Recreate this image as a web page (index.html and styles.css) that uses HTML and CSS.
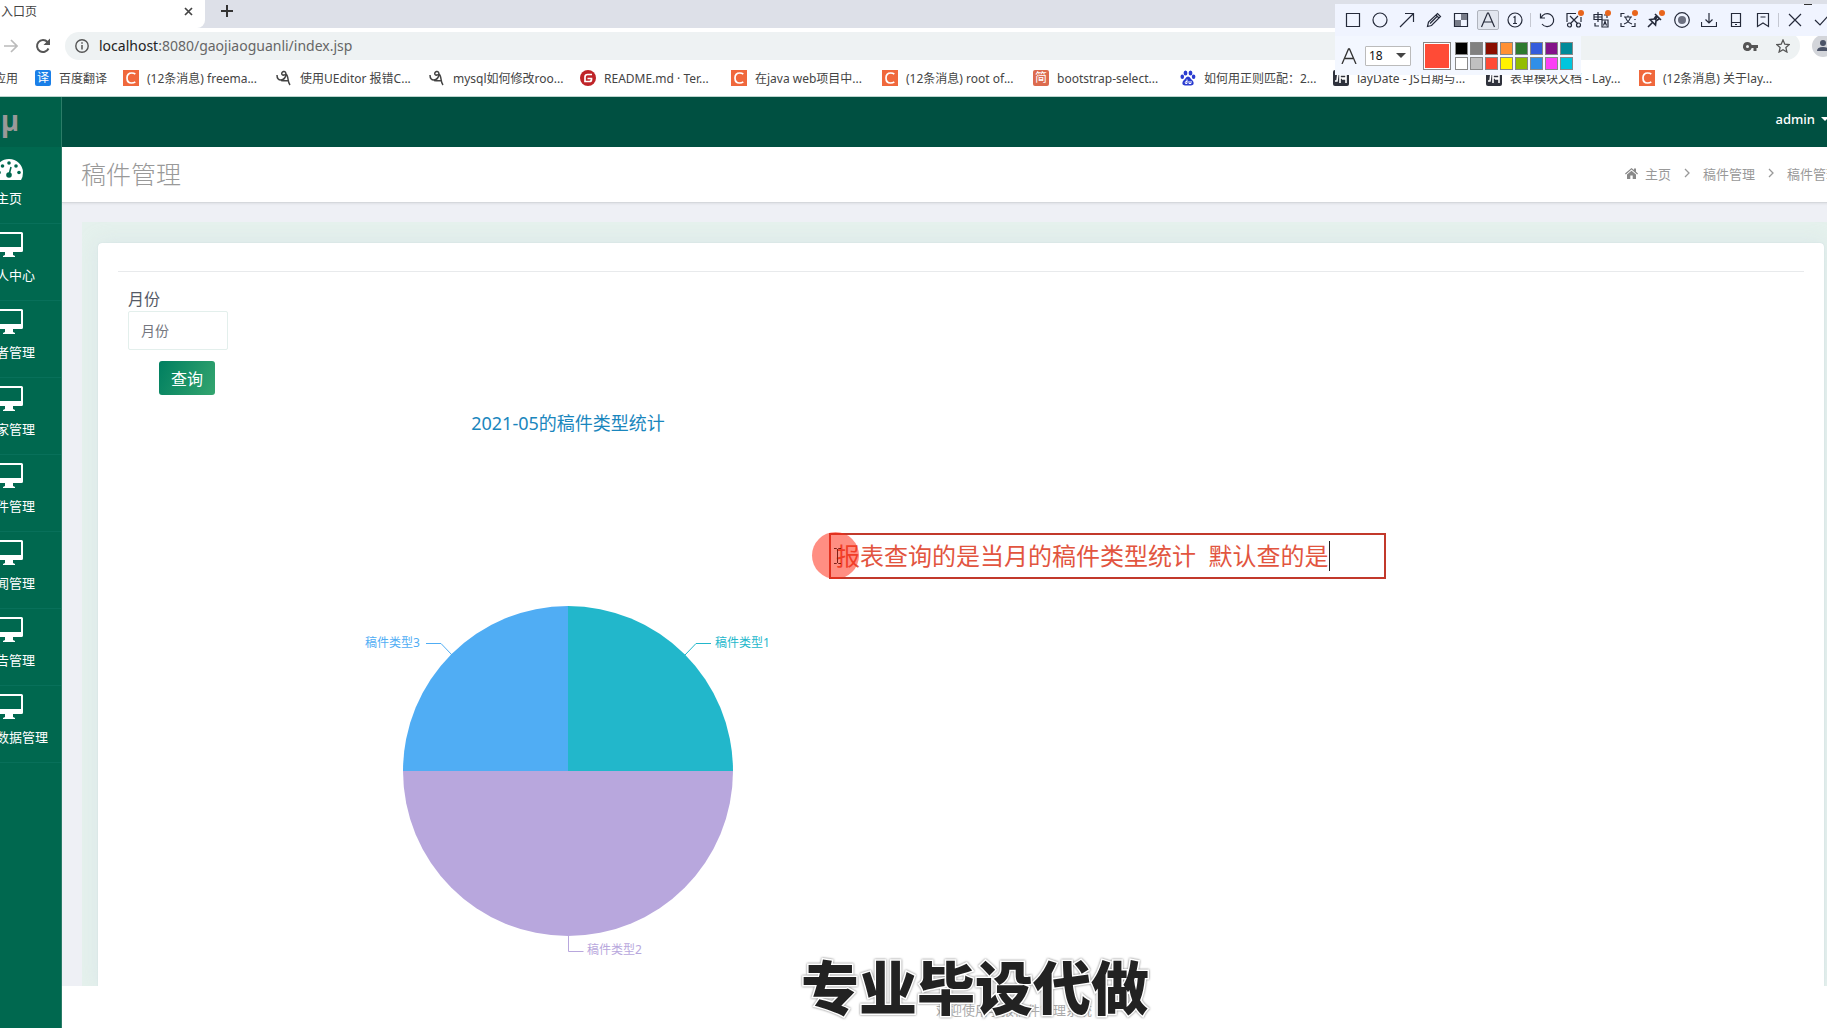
FILE: index.html
```html
<!DOCTYPE html>
<html lang="zh-CN">
<head>
<meta charset="utf-8">
<title>入口页</title>
<link rel="stylesheet" href="styles.css">
</head>
<body>
<svg class="defs" aria-hidden="true">
  <symbol id="monitor" viewBox="0 0 28 25"><path fill-rule="evenodd" d="M1.500 0h25a1.500 1.500 0 0 1 1.500 1.500v17a1.500 1.500 0 0 1-1.500 1.500H18v3l2 1v1H8v-1l2-1v-3H1.500A1.500 1.500 0 0 1 0 18.500v-17A1.500 1.500 0 0 1 1.500 0zM2 2v13h24V2z"/></symbol>
  <symbol id="csdn" viewBox="0 0 16 16"><path fill="#f0683c" d="M0 0h16v16H0z"/><path d="M12.300 4.200Q11 3 8.700 3C5.500 3 4 5.200 4 8s1.500 5 4.500 5q2.300 0 3.800-1.200" fill="none" stroke="#fff" stroke-width="1.700"/></symbol>
  <symbol id="cat" viewBox="0 0 16 16"><path d="M1 5q0 5 4 5 4-.5 5-5M10 5q0-4-2.500-3.500Q5 2.500 6 4.500q1.500 1.500 4-.5 1.500 1 2 5t2 6M5 10.500q4 .5 7 0" fill="none" stroke="#444" stroke-width="1.500"/></symbol>
  <symbol id="layui" viewBox="0 0 16 16"><rect width="16" height="16" rx="2" fill="#2f323c"/><path d="M5 3L4 11H2M7 4v9M7 5h6v3H7m6-3v8m-4-4h4" fill="none" stroke="#fff" stroke-width="1.600"/></symbol>
  <symbol id="chev" viewBox="0 0 6 10"><path d="M1 1l4 4-4 4" fill="none" stroke="#999" stroke-width="1.300"/></symbol>
</svg>

<div class="browser">
  <div class="tabstrip">
    <div class="tab"><span>入口页</span>
      <button class="bare" aria-label="关闭标签"><svg width="9" height="9" viewBox="0 0 9 9"><path d="M1 1l7 7M8 1L1 8" stroke="#444" stroke-width="1.700"/></svg></button>
    </div>
    <button class="bare newtab" aria-label="新标签"><svg width="12" height="12" viewBox="0 0 12 12"><path d="M6 0v12M0 6h12" stroke="#333" stroke-width="2"/></svg></button>
  </div>
  <div class="navbar">
    <button class="bare" aria-label="前进"><svg width="14" height="14" viewBox="0 0 14 14"><path d="M0 7h12M7 1l6 6-6 6" fill="none" stroke="#bbb" stroke-width="1.700"/></svg></button>
    <button class="bare reload" aria-label="刷新"><svg width="16" height="16" viewBox="0 0 16 16"><path d="M13.500 10.500A6 6 0 1 1 12.500 4L14 5.500" fill="none" stroke="#555" stroke-width="2"/><path d="M15 .5V7H8.500z" fill="#555"/></svg></button>
    <div class="omnibox">
      <svg width="14" height="14" viewBox="0 0 14 14"><circle cx="7" cy="7" r="6.200" fill="none" stroke="#555" stroke-width="1.400"/><path d="M7 6v4.500M7 3.300v1.500" stroke="#555" stroke-width="1.500"/></svg>
      <span class="url"><b>localhost</b>:8080/gaojiaoguanli/index.jsp</span>
      <svg width="15" height="9" viewBox="0 0 15 9"><path fill="#555" fill-rule="evenodd" d="M4.500 0a4.500 4.500 0 0 1 4.200 3H15v3h-1.500v3h-3V6H8.700A4.500 4.500 0 1 1 4.500 0zm0 3a1.500 1.500 0 1 0 0 3 1.500 1.500 0 0 0 0-3z"/></svg>
      <svg class="star" width="14" height="14" viewBox="0 0 14 14"><path d="M7 1l1.800 4.200 4.500.4-3.400 3 1 4.400L7 10.700 3.100 13l1-4.400-3.400-3 4.500-.4z" fill="none" stroke="#555" stroke-width="1.300"/></svg>
    </div>
    <svg class="avatar" width="22" height="22" viewBox="0 0 22 22"><circle cx="11" cy="11" r="11" fill="#d3d5da"/><circle cx="11" cy="8" r="3" fill="#4c5468"/><path d="M5 16q0-4 6-4t6 4z" fill="#4c5468"/></svg>
  </div>
  <nav class="bookmarks">
    <a href="#" class="apps">应用</a>
    <a href="#" class="fanyi"><i class="badge blue">译</i>百度翻译</a>
    <a href="#" class="wide"><svg><use href="#csdn"/></svg>(12条消息) freema...</a>
    <a href="#" class="wide"><svg><use href="#cat"/></svg>使用UEditor 报错C...</a>
    <a href="#"><svg><use href="#cat"/></svg>mysql如何修改roo...</a>
    <a href="#"><svg viewBox="0 0 16 16"><circle cx="8" cy="8" r="8" fill="#bf2428"/><path d="M12 4.500H7.500Q5 4.500 5 7v4.500h4.500q2 0 2-2v-1H7.500" fill="none" stroke="#fff" stroke-width="1.700"/></svg>README.md · Ter...</a>
    <a href="#"><svg><use href="#csdn"/></svg>在java web项目中...</a>
    <a href="#"><svg><use href="#csdn"/></svg>(12条消息) root of...</a>
    <a href="#" class="narrow"><i class="badge brick">简</i>bootstrap-select...</a>
    <a href="#" class="wide"><svg viewBox="0 0 16 16" fill="#2b3cd0"><ellipse cx="5.500" cy="3" rx="1.900" ry="2.600"/><ellipse cx="10.500" cy="3" rx="1.900" ry="2.600"/><ellipse cx="2.300" cy="6.800" rx="1.800" ry="2.200"/><ellipse cx="13.600" cy="6.800" rx="1.800" ry="2.200"/><path d="M8 6.500q2 0 3 2.500l2 2q2 4-2 4.500H5Q1 15 3 11l2-2q1-2.500 3-2.500z"/><path d="M7 9.500v4H5.500q-1-1.500.5-2h1M9 11v2.500h2V11" fill="none" stroke="#fff"/></svg>如何用正则匹配：2...</a>
    <a href="#" class="wide"><svg><use href="#layui"/></svg>layDate - JS日期与...</a>
    <a href="#" class="wide"><svg><use href="#layui"/></svg>表单模块文档 - Lay...</a>
    <a href="#"><svg><use href="#csdn"/></svg>(12条消息) 关于lay...</a>
  </nav>
</div>

<div class="app">
  <aside class="sidebar">
    <a href="#" class="brand">μ</a>
    <a href="#" class="item"><svg width="28" height="21" viewBox="0 0 28 21"><path fill="#fff" d="M3 21Q0 18 0 13.500a14 13.500 0 0 1 28 0Q28 18 26 21z"/><g fill="#00684f"><circle cx="4" cy="13.500" r="1.800"/><circle cx="7.500" cy="7" r="1.800"/><circle cx="14" cy="4" r="1.800"/><circle cx="21" cy="7" r="1.800"/><circle cx="24" cy="13.500" r="1.800"/><circle cx="14" cy="16" r="2.800"/></g><path d="M14 16l2-8" stroke="#00684f" stroke-width="1.600"/></svg>主页</a>
    <a href="#" class="item"><svg class="mon"><use href="#monitor"/></svg>个人中心</a>
    <a href="#" class="item"><svg class="mon"><use href="#monitor"/></svg>作者管理</a>
    <a href="#" class="item"><svg class="mon"><use href="#monitor"/></svg>专家管理</a>
    <a href="#" class="item"><svg class="mon"><use href="#monitor"/></svg>稿件管理</a>
    <a href="#" class="item"><svg class="mon"><use href="#monitor"/></svg>新闻管理</a>
    <a href="#" class="item"><svg class="mon"><use href="#monitor"/></svg>公告管理</a>
    <a href="#" class="item"><svg class="mon"><use href="#monitor"/></svg>基础数据管理</a>
  </aside>
  <div class="page">
    <header class="topbar"><button class="bare user">admin <i class="caret"></i></button></header>
    <div class="titlebar">
      <h1>稿件管理</h1>
      <nav class="crumbs">
        <svg width="13" height="11" viewBox="0 0 13 11"><path fill="#888" d="M6.500 0l2.500 2V.5h2v3.200L13 5.500l-.8.9L6.500 1.600.8 6.400 0 5.500zM6.500 2.800L11 6.500V11H7.700V7.500H5.300V11H2V6.500z"/></svg>
        <a href="#">主页</a><svg class="chev"><use href="#chev"/></svg>
        <a href="#">稿件管理</a><svg class="chev"><use href="#chev"/></svg>
        <span>稿件管理</span>
      </nav>
    </div>
    <main class="content">
      <div class="panel">
        <section class="card">
          <hr>
          <form class="search">
            <label for="month">月份</label>
            <input id="month" type="text" placeholder="月份">
            <button type="button" class="query">查询</button>
          </form>
          <svg class="chart" width="880" height="560" viewBox="0 0 880 560" role="img" aria-label="2021-05的稿件类型统计">
            <text class="chart-title" x="440" y="29" text-anchor="middle">2021-05的稿件类型统计</text>
            <path fill="#22b7cb" d="M440 370V205a165 165 0 0 1 165 165z"/>
            <path fill="#b8a7dd" d="M440 370h165a165 165 0 0 1-330 0z"/>
            <path fill="#50adf4" d="M440 370H275a165 165 0 0 1 165-165z"/>
            <g fill="none">
              <path stroke="#22b7cb" d="M557 254l11-11.500h15"/>
              <path stroke="#b8a7dd" d="M440.500 535v15.500h15"/>
              <path stroke="#50adf4" d="M324 254l-11-11.500h-15"/>
            </g>
            <text x="587" y="246" fill="#22b7cb">稿件类型1</text>
            <text x="459" y="553" fill="#b8a7dd">稿件类型2</text>
            <text x="237" y="246" fill="#50adf4">稿件类型3</text>
          </svg>
        </section>
      </div>
    </main>
    <footer class="footer">欢迎使用学报稿件管理系统</footer>
  </div>
</div>

<div class="shot-tools">
  <svg class="restore" width="10" height="2" viewBox="0 0 10 2"><path d="M1 .5h8" stroke="#333"/></svg>
  <div class="tools">
    <button aria-label="矩形"><svg viewBox="0 0 16 16"><path d="M1.500 1.500h13v13h-13z"/></svg></button>
    <button aria-label="椭圆"><svg viewBox="0 0 16 16"><circle cx="8" cy="8" r="7"/></svg></button>
    <button aria-label="箭头"><svg viewBox="0 0 16 16"><path d="M1 15L14.500 1.500M6 1.500h8.500V10"/></svg></button>
    <button aria-label="画笔"><svg viewBox="0 0 16 16"><path d="M1.500 14.500l1-4.500 9-8.500 3 3-9 9zM4 11.500l7-7M10 3l3 3"/></svg></button>
    <button aria-label="马赛克"><svg viewBox="0 0 16 16"><path d="M1.500 1.500h13v13h-13z"/><path d="M8 2h6v6H8zM2 8h6v6H2z" fill="#777b88" stroke="none"/></svg></button>
    <button class="on" aria-label="文字"><svg viewBox="0 0 16 16"><path d="M1.500 15L7.500 1h1l6 14M4 10h8"/></svg></button>
    <button aria-label="序号"><svg viewBox="0 0 16 16"><circle cx="8" cy="8" r="7"/><path d="M6.500 5.500L8 4.500v7M6 11.500h4"/></svg></button>
    <i class="sep"></i>
    <button aria-label="撤销"><svg viewBox="0 0 16 16"><path d="M1.500 1.500V6H6M2 6a6.500 6.500 0 1 1 1 6"/></svg></button>
    <button class="new" aria-label="裁剪"><svg viewBox="0 0 16 16"><path d="M1 10V1.500h9M4 4l8 8M12 4l-8 8M15 5v5"/><circle cx="3.500" cy="13" r="2"/><circle cx="12.500" cy="13" r="2"/></svg></button>
    <button class="new" aria-label="翻译"><svg viewBox="0 0 16 16"><path d="M1 2.500h8v5H1zM5 0v10M1 5h8M11 3h3v3M9 8h6v7H9zM2 11v3h4M10.500 13.500l1.500-4 1.500 4"/></svg></button>
    <button class="new" aria-label="识别文字"><svg viewBox="0 0 16 16"><path d="M1 5V1.500h3.500M15 8v-1M1 11v3.500h3.500M15 11v3.500h-3.500M4 5h8M8 3.500V5M5.500 5q1 5 6.500 7M10.500 5q-1 5-6.500 7"/></svg></button>
    <button class="new" aria-label="钉住"><svg viewBox="0 0 16 16"><path d="M8 2l6 6M9.500 3.500L7 7 3 7.500 8.500 13 9 9l3.500-2.500M5.500 10.500L1 15M10 5l-2 3" stroke-width="1.600"/></svg></button>
    <button aria-label="录制"><svg viewBox="0 0 16 16"><circle cx="8" cy="8" r="7.300"/><circle cx="8" cy="8" r="4" fill="#6c7080" stroke="none"/></svg></button>
    <button aria-label="保存"><svg viewBox="0 0 16 16"><path d="M8 1v10M4.500 7.500L8 11l3.500-3.500M.500 10v4.500h15V10"/></svg></button>
    <button aria-label="手机"><svg viewBox="0 0 16 16"><path d="M3.500 1.500h9v13h-9zM3.500 10.500h9M7 12.500h2"/></svg></button>
    <button aria-label="收藏"><svg viewBox="0 0 16 16"><path d="M2.500 1.500h11v13L8 11l-5.500 3.500zM5.500 5h5"/></svg></button>
    <i class="sep"></i>
    <button aria-label="取消"><svg viewBox="0 0 16 16"><path d="M2 2l12 12M14 2L2 14"/></svg></button>
    <button aria-label="完成"><svg viewBox="0 0 16 16"><path d="M1 8l5 5L15 3"/></svg></button>
  </div>
  <div class="options">
    <svg width="16" height="16" viewBox="0 0 16 16" fill="none" stroke="#333" stroke-width="1.300"><path d="M1 16L7.500 1h1L15 16M4 10.500h8"/></svg>
    <span class="size"><select aria-label="字号"><option>18</option></select></span>
    <i class="current"></i>
    <div class="swatches">
      <i class="c-black"></i><i class="c-gray"></i><i class="c-maroon"></i><i class="c-orange"></i><i class="c-green"></i><i class="c-blue"></i><i class="c-purple"></i><i class="c-teal"></i>
      <i class="c-white"></i><i class="c-silver"></i><i class="c-red"></i><i class="c-yellow"></i><i class="c-lime"></i><i class="c-sky"></i><i class="c-pink"></i><i class="c-cyan"></i>
    </div>
  </div>
</div>

<div class="note"><span>报表查询的是当月的稿件类型统计&nbsp; 默认查的是</span></div>
<div class="pointer"><svg width="7" height="16" viewBox="0 0 7 16"><path d="M0 .5h2.500l1 1 1-1H7M3.500 1v14M0 15.500h2.500l1-1 1 1H7" fill="none" stroke="#7c2018"/></svg></div>
<div class="caption">专业毕设代做</div>
</body>
</html>
```
FILE: styles.css
```css
* { box-sizing: border-box; }
body {
  margin: 0;
  min-height: 100vh;
  display: flex;
  flex-direction: column;
  position: relative;
  overflow: hidden;
  background: #fff;
  font-family: "Noto Sans", "Noto Sans CJK SC", sans-serif;
}
a { color: inherit; text-decoration: none; }
i { font-style: normal; }
svg { flex: none; display: block; }
.defs { position: absolute; width: 0; height: 0; }
.bare { border: 0; padding: 0; background: none; display: flex; align-items: center; font: inherit; color: inherit; }

/* browser chrome */
.browser { color: #444; font-size: 12px; border-bottom: 1px solid #bcd5ce; }
.tabstrip { height: 28px; background: #dde0e8; display: flex; align-items: center; }
.tab { width: 205px; height: 28px; background: #fff; border-bottom-right-radius: 8px; display: flex; justify-content: space-between; padding: 0 12px 6px 1px; align-items: center; }
.newtab { margin: 0 0 6px 16px; }
.navbar { height: 36px; display: flex; align-items: center; padding-left: 4px; background: #fff; }
.reload { margin: 0 14px 0 17px; }
.omnibox { flex: 1; height: 28px; border-radius: 14px; background: #eef2f3; display: flex; align-items: center; padding: 0 10px; font-size: 14px; color: #666; }
.url { flex: 1; margin-left: 10px; padding-bottom: 2px; }
.url b { font-weight: 400; color: #222; }
.star { margin-left: 18px; }
.avatar { margin: 0 -7px 0 12px; }
.bookmarks { height: 32px; display: flex; align-items: center; padding-bottom: 4px; white-space: nowrap; overflow: hidden; }
.bookmarks a { width: 151px; flex: none; display: flex; align-items: center; gap: 8px; }
.bookmarks svg { width: 16px; height: 16px; }
.bookmarks .apps { width: 41px; margin-left: -6px; }
.bookmarks .fanyi { width: 88px; }
.bookmarks .wide { width: 153px; }
.bookmarks .narrow { width: 147px; }
.badge { width: 16px; height: 16px; border-radius: 2px; color: #fff; font-size: 12px; line-height: 16px; text-align: center; }
.blue { background: #1a7fe8; }
.brick { background: #dc6b4e; }

/* application: wider than the window on both sides */
.app { flex: 1; display: flex; margin: 0 -33px 0 -43px; }
.sidebar { width: 105px; flex: none; background: #00684f; color: #fff; border-right: 1px solid #2b7d68; }
.brand { height: 50px; background: #006049; color: #999; display: flex; align-items: center; justify-content: center; padding: 0 0 4px 2px; font: bold 28px "Open Sans", sans-serif; }
.item { height: 77px; border-bottom: 1px solid #08705a; display: flex; flex-direction: column; align-items: center; justify-content: space-between; padding: 8px 0 15px; font-size: 13px; line-height: 20px; white-space: nowrap; }
.item:nth-child(2) { padding-top: 12px; }
.mon { width: 28px; height: 25px; fill: #fff; }
.page { flex: 1; min-width: 0; display: flex; flex-direction: column; }
.topbar { height: 50px; background: #005041; color: #fff; display: flex; align-items: center; justify-content: flex-end; padding: 0 31px 6px 0; font-size: 13px; }
.user { gap: 6px; font-weight: 500; }
.caret { border: 4px solid transparent; border-top-color: #fff; border-bottom: 0; }
.titlebar { height: 56px; background: #fff; border-bottom: 1px solid #d5d8dc; display: flex; align-items: center; justify-content: space-between; padding: 0 21px 3px 19px; position: relative; box-shadow: 0 1px 2px #0001; }
h1 { margin: 0; font-size: 25px; font-weight: 300; color: #999; }
.crumbs { display: flex; align-items: center; font-size: 13px; color: #999; gap: 7px; }
.chev { width: 6px; height: 10px; margin: 0 6px; }
.content { flex: 1; background: #eef0f5; padding: 19px 20px 0; display: flex; }
.panel { flex: 1; background: #e5f1ed; padding: 21px 16px 0; display: flex; overflow: hidden; }
.card { flex: 1; background: #fff; border-radius: 4px 4px 0 0; box-shadow: 0 0 20px #c8d7e160, 0 0 1px #b5cbd0; padding: 28px 20px 0; }
hr { border: 0; border-top: 1px solid #e8eaec; margin: 0 0 16px; }
.search { display: flex; flex-direction: column; align-items: flex-start; padding-left: 10px; }
.search label { font-size: 16px; line-height: 23px; color: #555a66; }
.search input { width: 100px; height: 39px; border: 1px solid #e3efec; border-radius: 2px; padding: 0 12px; font: inherit; font-size: 14px; background: #fff; }
.search input::placeholder { color: #757780; }
.query { margin: 11px 0 0 31px; width: 56px; height: 34px; border: 0; border-radius: 3px; color: #fff; font: inherit; font-size: 16px; padding: 0; background: linear-gradient(115deg, #007f60, #34a56f); }
.chart { margin: 6px 0 0 10px; font-size: 12px; }
.chart-title { font-size: 18px; fill: #1a86bd; }
.footer { height: 42px; display: flex; align-items: center; justify-content: center; padding: 4px 0 0 106px; font-size: 13px; color: #aaa; background: #fff; }

/* screenshot tool floating above the page */
.shot-tools { position: absolute; top: 4px; right: 0; width: 492px; }
.restore { position: absolute; right: 14px; top: 0; }
.tools { height: 32px; background: #f0f4ff; display: flex; align-items: center; padding-left: 4px; overflow: hidden; }
.tools button { width: 27px; height: 20px; flex: none; border: 0; padding: 0; background: none; display: flex; align-items: center; justify-content: center; position: relative; }
.tools .on { width: 22px; margin: 0 2px 0 3px; background: #e2e6ef; border: 1px solid #b0b4bd; border-radius: 2px; }
.tools svg { width: 16px; height: 16px; fill: none; stroke: #252a3a; stroke-width: 1.200; }
.new::after { content: ""; position: absolute; top: 0; right: 3px; width: 6px; height: 6px; border-radius: 50%; background: #e8651c; }
.sep { width: 1px; height: 14px; margin: 0 2px; background: #c5c8d2; flex: none; }
.options { width: 246px; height: 39px; background: #f3f7ff; display: flex; align-items: center; padding-left: 6px; }
.size { position: relative; margin-left: 8px; display: flex; }
.size::after { content: ""; position: absolute; right: 5px; top: 7px; border: 5px solid transparent; border-top-color: #444; border-bottom: 0; }
.size select { appearance: none; width: 46px; height: 20px; border: 1px solid #bbb; border-radius: 1px; background: #fff; padding: 0 3px; font: 12px "Noto Sans", sans-serif; color: #111; }
.current { width: 28px; height: 28px; margin: 0 4px 0 12px; background: #ff4b36; border: 1px solid #888; box-shadow: inset 0 0 0 1px #fff; }
.swatches { display: grid; grid-template-columns: repeat(8, 13px); grid-auto-rows: 13px; gap: 2px; }
.swatches i { border: 1px solid #888; }
.c-black { background: #000; } .c-gray { background: #808080; } .c-maroon { background: #8b0d00; } .c-orange { background: #ff9034; }
.c-green { background: #2d7a2f; } .c-blue { background: #345bdc; } .c-purple { background: #83128a; } .c-teal { background: #008a99; }
.c-white { background: #fff; } .c-silver { background: #c0c0c0; } .c-red { background: #ff4b36; } .c-yellow { background: #fff200; }
.c-lime { background: #93bd00; } .c-sky { background: #2f8fe8; } .c-pink { background: #fb3ff5; } .c-cyan { background: #00c5de; }

/* annotation, pointer and caption lying over the page */
.note { position: absolute; left: 829px; top: 533px; width: 557px; height: 46px; border: 2px solid #c2392b; color: #e2553f; font-size: 24px; padding-left: 5px; white-space: nowrap; display: flex; align-items: center; }
.note span { border-right: 1px solid #222; height: 30px; line-height: 30px; padding-right: 1px; }
.pointer { position: absolute; left: 812px; top: 532px; width: 47px; height: 47px; border-radius: 50%; background: #ff2b1488; display: flex; align-items: center; justify-content: center; padding-left: 4px; }
.caption { position: absolute; left: 801px; top: 946px; font-size: 58px; line-height: 84px; font-weight: 900; color: #222; white-space: nowrap; -webkit-text-stroke: 3px #fff; paint-order: stroke fill; filter: drop-shadow(0 0 1px #777); }
```
